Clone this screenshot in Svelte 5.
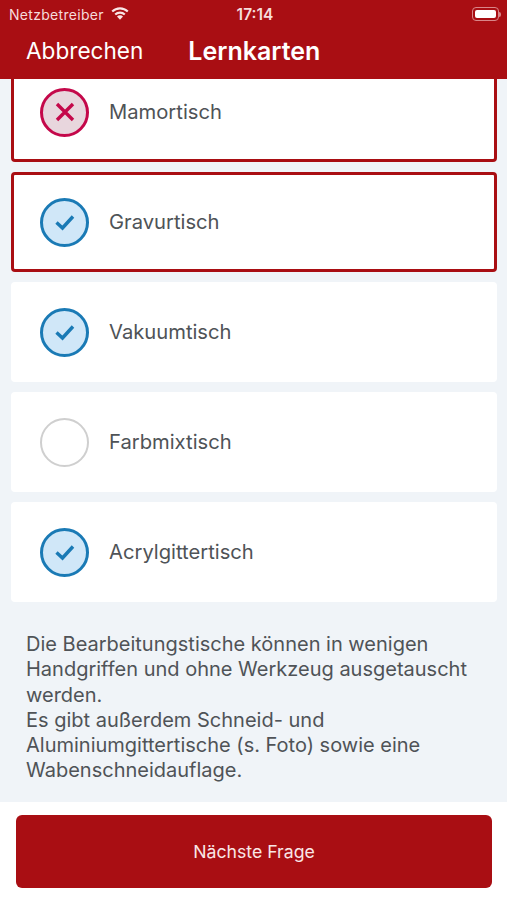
<script>
  const answers = [
    { label: 'Mamortisch', state: 'wrong', flagged: true },
    { label: 'Gravurtisch', state: 'checked', flagged: true },
    { label: 'Vakuumtisch', state: 'checked' },
    { label: 'Farbmixtisch', state: 'empty' },
    { label: 'Acrylgittertisch', state: 'checked' }
  ]
</script>

<div class="page">
  <header class="top">
    <div class="status">
      <div class="carrier">
        <span>Netzbetreiber</span>
        <svg class="wifi" viewBox="0 0 18 13" width="18" height="13">
          <path d="M1.200 4.600A11 11 0 0 1 16.800 4.600" fill="none" stroke="#f9e6e6" stroke-width="2.100"/>
          <path d="M4.200 7.600A6.800 6.800 0 0 1 13.800 7.600" fill="none" stroke="#f9e6e6" stroke-width="2.100"/>
          <path d="M6 9.600A4.200 4.200 0 0 1 12 9.600L9 12.800z" fill="#f9e6e6"/>
        </svg>
      </div>
      <div class="time">17:14</div>
      <div class="battery">
        <span class="cell"><span class="charge"></span></span>
        <span class="nub"></span>
      </div>
    </div>
    <nav class="bar">
      <span class="cancel">Abbrechen</span>
      <span class="title">Lernkarten</span>
    </nav>
  </header>

  <main class="scroller">
    <div class="content">
      {#each answers as a}
        <div class="card" class:flagged={a.flagged}>
          <span class="mark {a.state}">
            {#if a.state === 'checked'}
              <svg viewBox="0 0 24 24" width="24" height="24">
                <path d="M3.500 12.500 L9.500 18 L20 6.500" fill="none" stroke="#1a7ab5" stroke-width="3.400"/>
              </svg>
            {:else if a.state === 'wrong'}
              <svg viewBox="0 0 24 24" width="24" height="24">
                <path d="M4 4 L20 20 M20 4 L4 20" fill="none" stroke="#c4084a" stroke-width="3.400"/>
              </svg>
            {/if}
          </span>
          <span class="label">{a.label}</span>
        </div>
      {/each}

      <p class="explain">
        Die Bearbeitungstische können in wenigen Handgriffen und ohne Werkzeug ausgetauscht werden.<br />
        Es gibt außerdem Schneid- und Aluminiumgittertische (s. Foto) sowie eine Wabenschneidauflage.
      </p>
    </div>
  </main>

  <footer class="foot">
    <button class="next" type="button">Nächste Frage</button>
  </footer>
</div>

<style>
  :global(body) {
    margin: 0;
    background: #fff;
  }

  .page {
    width: 507px;
    height: 900px;
    display: flex;
    flex-direction: column;
    font-family: Inter, 'Noto Sans', sans-serif;
    overflow: hidden;
  }

  .top {
    height: 79px;
    flex: none;
    background: #a90e13;
    color: #fff;
    position: relative;
    z-index: 1;
  }

  .status {
    height: 28px;
    padding: 0 6px 0 9px;
    display: grid;
    grid-template-columns: 1fr auto 1fr;
    align-items: center;
    font-size: 14px;
    color: #f6dcdc;
  }

  .carrier {
    display: flex;
    align-items: center;
    gap: 7px;
    letter-spacing: 0.3px;
  }

  .wifi {
    margin-top: -2px;
  }

  .time {
    font-weight: 600;
    font-size: 15.500px;
  }

  .battery {
    justify-self: end;
    display: flex;
    align-items: center;
  }

  .cell {
    width: 27px;
    height: 14px;
    box-sizing: border-box;
    border: 1px solid #d98689;
    border-radius: 4px;
    padding: 2px;
    display: block;
  }

  .charge {
    display: block;
    height: 100%;
    background: #fff;
    border-radius: 2px;
  }

  .nub {
    width: 2px;
    height: 5px;
    background: #d98689;
    border-radius: 0 2px 2px 0;
  }

  .bar {
    height: 45px;
    padding-left: 26px;
    display: flex;
    align-items: center;
    gap: 45px;
    font-size: 22.600px;
  }

  .title {
    font-weight: 600;
    font-size: 25px;
  }

  .scroller {
    flex: 1;
    background: #f0f4f8;
    overflow: hidden;
  }

  /* list is scrolled a bit, first card sits under the header */
  .content {
    margin-top: -17px;
    padding: 0 10px 0 11px;
    display: grid;
    gap: 10px;
  }

  .card {
    height: 100px;
    box-sizing: border-box;
    padding-left: 29px;
    background: #fff;
    border-radius: 4px;
    display: flex;
    align-items: center;
    gap: 19px;
  }

  .card.flagged {
    border: 3px solid #a90e13;
    padding-left: 26px;
  }

  .mark {
    width: 49px;
    height: 49px;
    box-sizing: border-box;
    border-radius: 50%;
    border: 2.500px solid #cfcfcf;
    display: flex;
    align-items: center;
    justify-content: center;
    flex: none;
  }

  .mark.checked {
    border: 3px solid #1a7ab5;
    background: #d0e7f8;
  }

  .mark.wrong {
    border: 3px solid #c4084a;
    background: #e8d6dd;
  }

  .label {
    font-size: 20.200px;
    color: #4f5357;
    padding: 0 0 2px 1px;
  }

  .explain {
    margin: 20px 0 0 15px;
    font-size: 20px;
    line-height: 25.300px;
    color: #4f5357;
    width: 456px;
  }

  .foot {
    height: 98px;
    flex: none;
    background: #fff;
    padding: 13px 15px 0 16px;
    box-sizing: border-box;
  }

  .next {
    width: 100%;
    height: 73px;
    border: 0;
    border-radius: 6px;
    background: #a90e13;
    color: #f9e6e6;
    font-family: inherit;
    font-size: 17.700px;
  }
</style>
